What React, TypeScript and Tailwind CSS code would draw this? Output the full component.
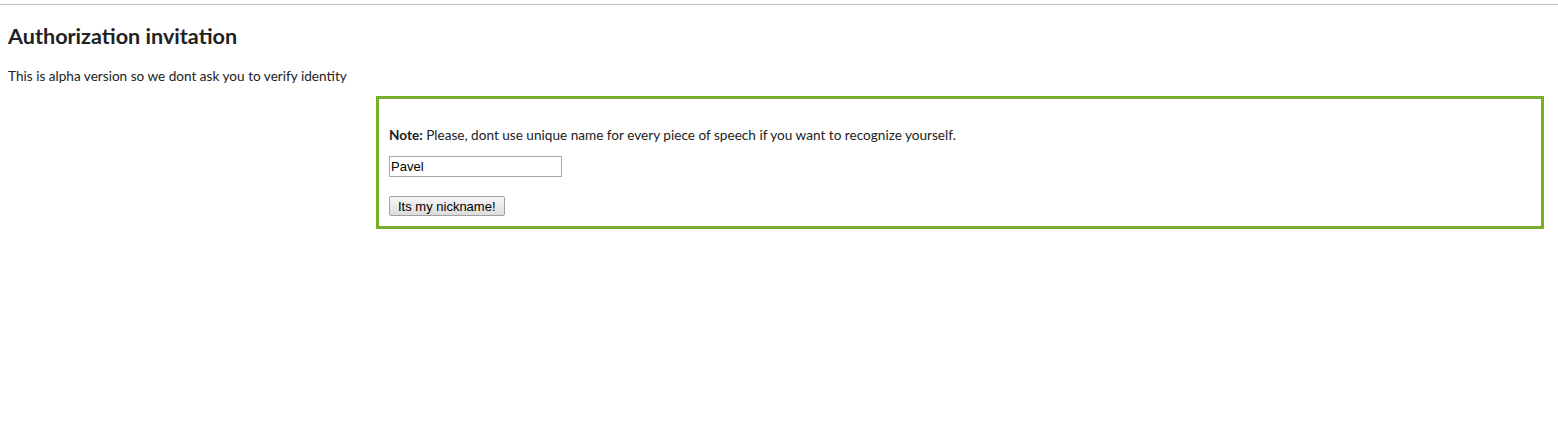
export default function App() {
  return (
    <div className="min-h-screen bg-white text-[#222] font-['Lato','Open_Sans',sans-serif]">
      <hr className="border-0 h-px bg-[#c4c4c4] mt-[4px]" />
      <div className="px-2">
        <h2 className="mt-[18px] text-[21.6px] font-bold leading-[26px]">Authorization invitation</h2>
        <p className="mt-[19px] text-[13.6px] leading-[16px]">This is alpha version so we dont ask you to verify identity</p>
        <div className="ml-[368px] mr-[6px] mt-[12px] border-[3px] border-[#78ae2c] px-[10px] pt-[28px] pb-[10px]">
          <p className="text-[13.6px] leading-[16px]">
            <b>Note:</b> Please, dont use unique name for every piece of speech if you want to recognize yourself.
          </p>
          <input
            type="text"
            defaultValue="Pavel"
            className="block mt-[13px] w-[173px] h-[21px] border border-[#a9a9a9] px-[1px] text-[13px] text-black font-['Liberation_Sans',Arial,sans-serif] outline-none"
          />
          <button className="block mt-[19px] h-[20px] px-[8px] border border-[#a0a0a0] rounded-[2px] bg-gradient-to-b from-[#f6f6f6] to-[#dddddd] text-[13px] text-black leading-none font-['Liberation_Sans',Arial,sans-serif]">
            Its my nickname!
          </button>
        </div>
      </div>
    </div>
  );
}
